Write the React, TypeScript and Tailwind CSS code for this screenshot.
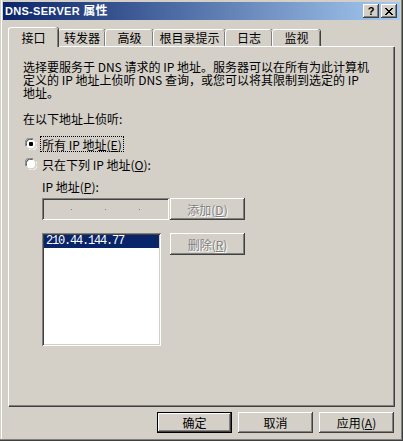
import React from "react";

const raised =
  "shadow-[inset_-1px_-1px_#404040,inset_1px_1px_#ffffff,inset_-2px_-2px_#808080,inset_2px_2px_#d4d0c8]";
const sunken =
  "shadow-[inset_1px_1px_#808080,inset_-1px_-1px_#ffffff,inset_2px_2px_#404040,inset_-2px_-2px_#d4d0c8]";
const disabledText = "text-[#808080] [text-shadow:1px_1px_0_#ffffff]";

function Radio({ checked }: { checked?: boolean }) {
  return (
    <svg width="12" height="12" viewBox="0 0 12 12" className="shrink-0">
      <path d="M0.5 8 A5.5 5.5 0 0 1 8 0.5" stroke="#808080" fill="none" />
      <path d="M4 11.5 A5.5 5.5 0 0 0 11.5 4" stroke="#ffffff" fill="none" />
      <circle cx="6" cy="6" r="4.5" fill="#ffffff" />
      <path d="M1.5 7.5 A4.5 4.5 0 0 1 7.5 1.5" stroke="#404040" fill="none" />
      <path d="M4.5 10.5 A4.5 4.5 0 0 0 10.5 4.5" stroke="#d4d0c8" fill="none" />
      {checked && <rect x="4" y="4" width="4" height="4" rx="1" fill="#000" />}
    </svg>
  );
}

function Tab({ label, active, w }: { label: string; active?: boolean; w: number }) {
  return (
    <div
      className={
        "flex items-start justify-center rounded-t-[3px] bg-[#d4d0c8] border-t border-l border-white shadow-[inset_-1px_0_#808080,1px_0_#404040] " +
        (active ? "h-[20px] pt-[3px] relative z-10 -mb-[1px]" : "h-[17px] pt-[1px]")
      }
      style={{ width: w }}
    >
      {label}
    </div>
  );
}

function Btn({
  children,
  disabled,
  def,
  w = 75,
  h = 21,
}: {
  children: React.ReactNode;
  disabled?: boolean;
  def?: boolean;
  w?: number;
  h?: number;
}) {
  return (
    <div
      className={
        "flex items-center justify-center bg-[#d4d0c8] " +
        (def
          ? "border border-black shadow-[inset_-1px_-1px_#404040,inset_1px_1px_#ffffff,inset_-2px_-2px_#808080] "
          : raised + " ") +
        (disabled ? disabledText : "text-black")
      }
      style={{ width: w, height: h }}
    >
      {children}
    </div>
  );
}

export default function App() {
  return (
    <div
      className="w-[403px] h-[441px] bg-[#d4d0c8] flex flex-col text-[12px] leading-[13px] text-black shadow-[inset_-1px_-1px_#404040,inset_-2px_-2px_#808080,inset_1px_0_#d4d0c8,inset_2px_0_#ffffff]"
      style={{ fontFamily: '"Noto Sans CJK SC", "Liberation Sans", sans-serif' }}
    >
      {/* title bar */}
      <div className="mx-[3px] mt-[2px] h-[18px] flex items-center justify-between bg-[linear-gradient(to_right,#0a246a,#a6caf0)] pl-[2px] pr-[3px]">
        <div
          className="text-white font-bold text-[11px] leading-[14px] tracking-[0.3px]"
          style={{ fontFamily: '"Liberation Sans", "Noto Sans CJK SC", sans-serif' }}
        >
          DNS-SERVER <span className="text-[12px]">属性</span>
        </div>
        <div className="flex gap-[2px]">
          <div
            className={"w-[16px] h-[14px] bg-[#d4d0c8] flex items-center justify-center font-bold text-[11px] leading-[11px] " + raised}
            style={{ fontFamily: '"Liberation Sans", sans-serif' }}
          >
            ?
          </div>
          <div className={"w-[16px] h-[14px] bg-[#d4d0c8] flex items-center justify-center " + raised}>
            <svg width="8" height="7" viewBox="0 0 8 7" shapeRendering="crispEdges">
              <path d="M0 0h2v1H0zM6 0h2v1H6zM1 1h2v1H1zM5 1h2v1H5zM2 2h4v1H2zM3 3h2v1H3zM2 4h4v1H2zM1 5h2v1H1zM5 5h2v1H5zM0 6h2v1H0zM6 6h2v1H6z" fill="#000" />
            </svg>
          </div>
        </div>
      </div>

      {/* tabs */}
      <div className="ml-[8px] mt-[7px] flex items-end">
        <Tab label="接口" active w={50} />
        <Tab label="转发器" w={47} />
        <Tab label="高级" w={48} />
        <Tab label="根目录提示" w={72} />
        <Tab label="日志" w={47} />
        <Tab label="监视" w={48} />
      </div>

      {/* panel */}
      <div className="ml-[8px] w-[386px] h-[360px] border-t border-l border-white shadow-[inset_-1px_-1px_#808080,1px_1px_#404040] flex flex-col pl-[14px] pt-[13px]">
        <div className="whitespace-nowrap">
          <div>选择要服务于 DNS 请求的 IP 地址。服务器可以在所有为此计算机</div>
          <div>定义的 IP 地址上侦听 DNS 查询，或您可以将其限制到选定的 IP</div>
          <div>地址。</div>
        </div>
        <div className="mt-[13px]">在以下地址上侦听:</div>

        <div className="mt-[11px] ml-[2px] flex items-center h-[16px]">
          <Radio checked />
          <div className="ml-[3px] px-[1px] h-[16px] flex items-center border border-dotted border-black">
            所有 IP 地址(<u>E</u>)
          </div>
        </div>
        <div className="mt-[4px] ml-[2px] flex items-center h-[16px]">
          <Radio />
          <div className="ml-[5px]">
            只在下列 IP 地址(<u>O</u>):
          </div>
        </div>

        <div className="mt-[8px] ml-[19px]">
          IP 地址(<u>P</u>):
        </div>

        <div className="mt-[5px] ml-[19px] flex gap-[1px]">
          <div className={"w-[127px] h-[22px] bg-[#d4d0c8] flex items-center pl-[29px] gap-[33px] " + sunken}>
            <span className="w-[1px] h-[1px] bg-[#808080]" />
            <span className="w-[1px] h-[1px] bg-[#808080]" />
            <span className="w-[1px] h-[1px] bg-[#808080]" />
          </div>
          <Btn disabled w={75} h={22}>
            添加(<u>D</u>)
          </Btn>
        </div>

        <div className="mt-[13px] ml-[19px] flex gap-[9px] items-start">
          <div className={"w-[119px] h-[113px] bg-white p-[2px] " + sunken}>
            <div
              className="bg-[#0a246a] text-white h-[13px] leading-[13px] pl-[2px] text-[12px] tracking-[-1.2px]"
              style={{ fontFamily: '"Liberation Mono", monospace' }}
            >
              210.44.144.77
            </div>
          </div>
          <Btn disabled w={75} h={22}>
            删除(<u>R</u>)
          </Btn>
        </div>
      </div>

      {/* bottom buttons */}
      <div className="mt-[6px] flex justify-end gap-[6px] pr-[9px]">
        <Btn def>确定</Btn>
        <Btn>取消</Btn>
        <Btn>
          应用(<u>A</u>)
        </Btn>
      </div>
    </div>
  );
}
